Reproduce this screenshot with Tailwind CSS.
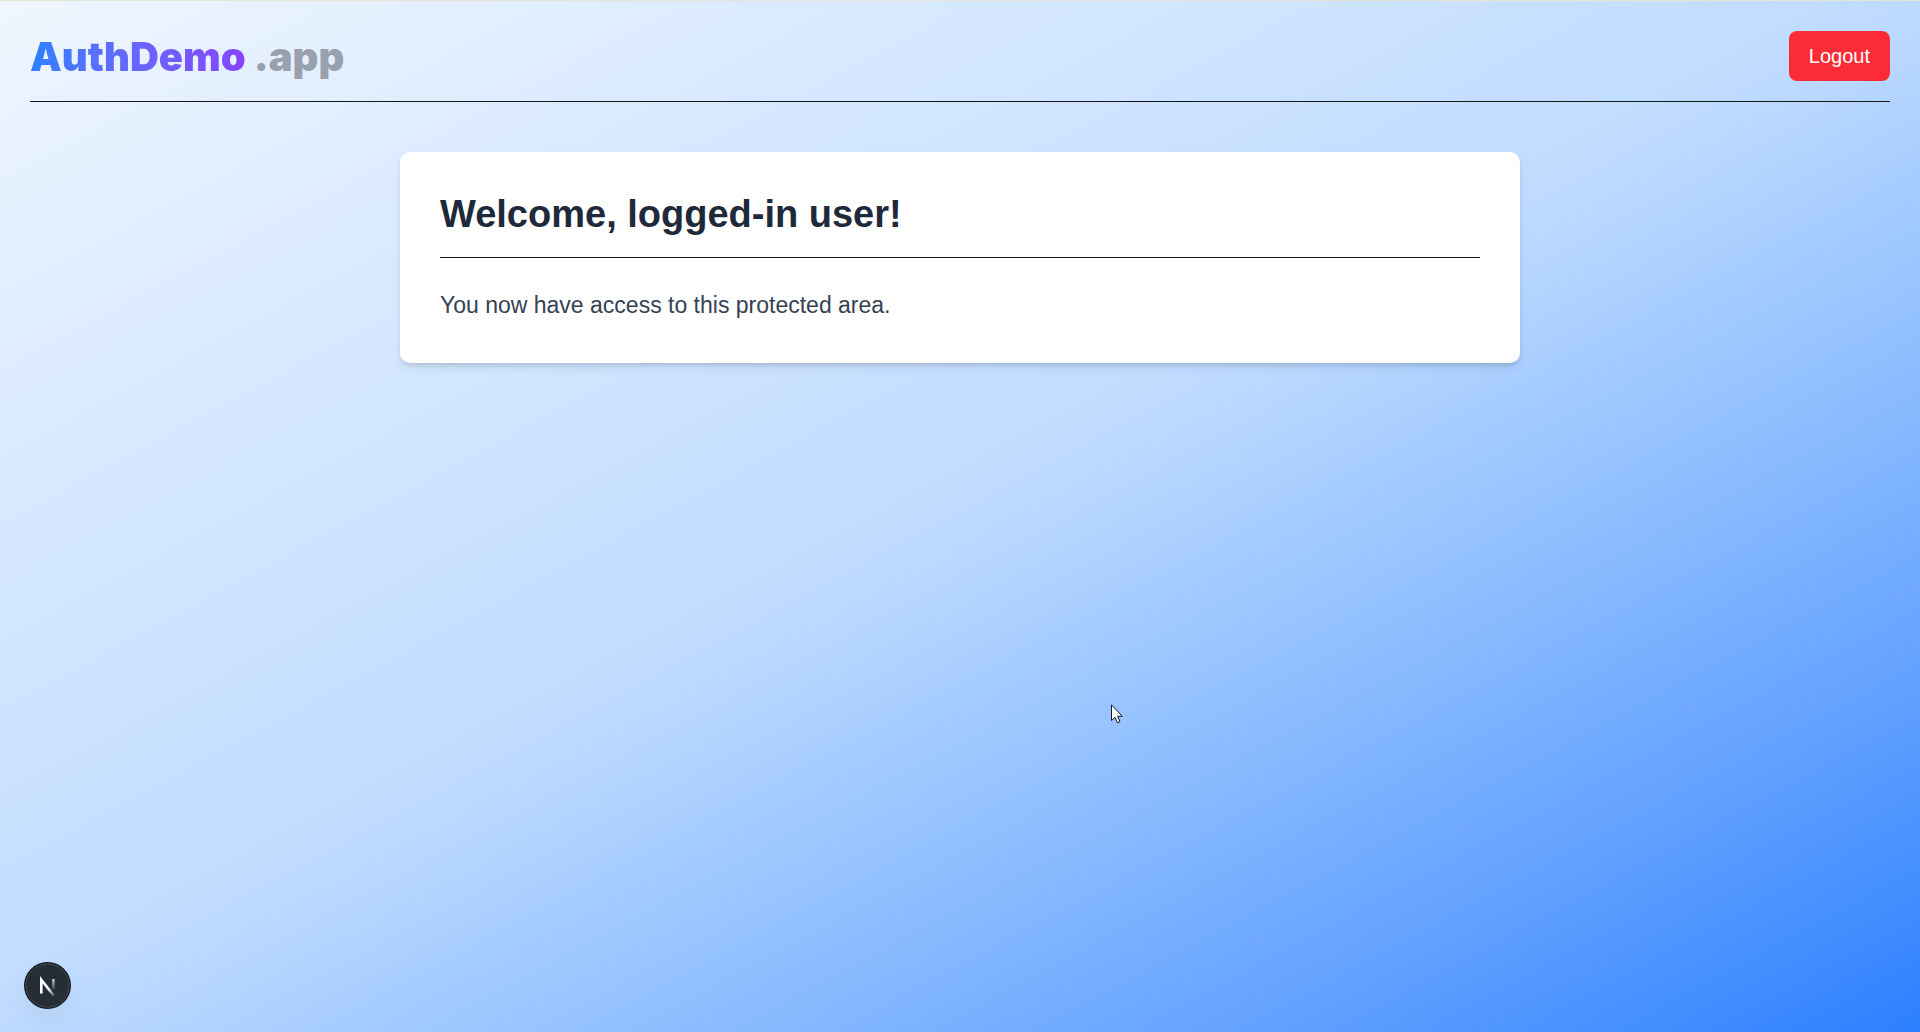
<!DOCTYPE html>
<html lang="en">
<head>
<meta charset="utf-8">
<meta name="viewport" content="width=device-width, initial-scale=1">
<title>AuthDemo.app</title>
<script src="https://cdn.jsdelivr.net/npm/@tailwindcss/browser@4"></script>
</head>
<body class="relative min-h-screen bg-linear-to-br from-blue-50 via-blue-200 to-blue-500 px-[30px] font-['Liberation_Sans',Arial,sans-serif]">
  <div class="absolute inset-x-0 top-0 h-px bg-[#e4e4d8]"></div>
  <header class="flex items-center justify-between border-b border-[#171717] pt-[31px] pb-5">
    <a href="#" class="pt-[2px] font-['Inter',sans-serif] text-[40px] leading-[48px] font-black"><span class="bg-linear-to-r from-blue-500 to-[#8644ff] bg-clip-text text-transparent">AuthDemo</span> <span class="text-gray-400">.app</span></a>
    <button type="button" class="rounded-lg bg-[#fb2c36] px-5 py-[10px] text-xl leading-[30px] text-white">Logout</button>
  </header>
  <main class="mx-auto mt-[50px] w-full max-w-[1120px] rounded-[10px] bg-white p-10 shadow-[0_5px_8px_-1px_rgb(0_0_0/0.1),0_3px_5px_-2px_rgb(0_0_0/0.1)]">
    <h1 class="border-b border-[#171717] pb-5 text-[38px] leading-[45px] font-bold text-gray-800">Welcome, logged-in user!</h1>
    <p class="mt-[30px] text-[23px] leading-[35px] text-gray-700">You now have access to this protected area.</p>
  </main>
  <button type="button" aria-label="Open developer tools" class="fixed bottom-[23px] left-6 size-[47px] rounded-full shadow-[0_16px_32px_-8px_rgb(0_0_0/0.1)]">
    <svg viewBox="0 0 47 47" class="size-[47px]" aria-hidden="true">
      <defs>
        <linearGradient id="diag" x1="25" y1="27" x2="31" y2="35" gradientUnits="userSpaceOnUse"><stop stop-color="#fff"/><stop offset="1" stop-color="#fff" stop-opacity="0"/></linearGradient>
        <linearGradient id="stem" x1="0" y1="17" x2="0" y2="29" gradientUnits="userSpaceOnUse"><stop stop-color="#fff" stop-opacity=".8"/><stop offset="1" stop-color="#fff" stop-opacity="0"/></linearGradient>
      </defs>
      <circle cx="23.500" cy="23.500" r="23.500" fill="#111519"/>
      <circle cx="23.500" cy="23.500" r="21.700" fill="#252e36" stroke="#4a5259"/>
      <path d="M17.300 31.500V17.800L30 34" fill="none" stroke="url(#diag)" stroke-width="2.600"/>
      <path d="M29.400 17V29" stroke="url(#stem)" stroke-width="2.400"/>
    </svg>
  </button>
  <svg viewBox="0 0 12 20" class="pointer-events-none absolute top-[704px] left-[1111px] h-5 w-3" aria-hidden="true">
    <path d="M.5 .8V16.500L4 13.300L6.500 18.800L9 17.600L6.600 12.300H11.300Z" fill="#fff" stroke="#15182a"/>
  </svg>
</body>
</html>
